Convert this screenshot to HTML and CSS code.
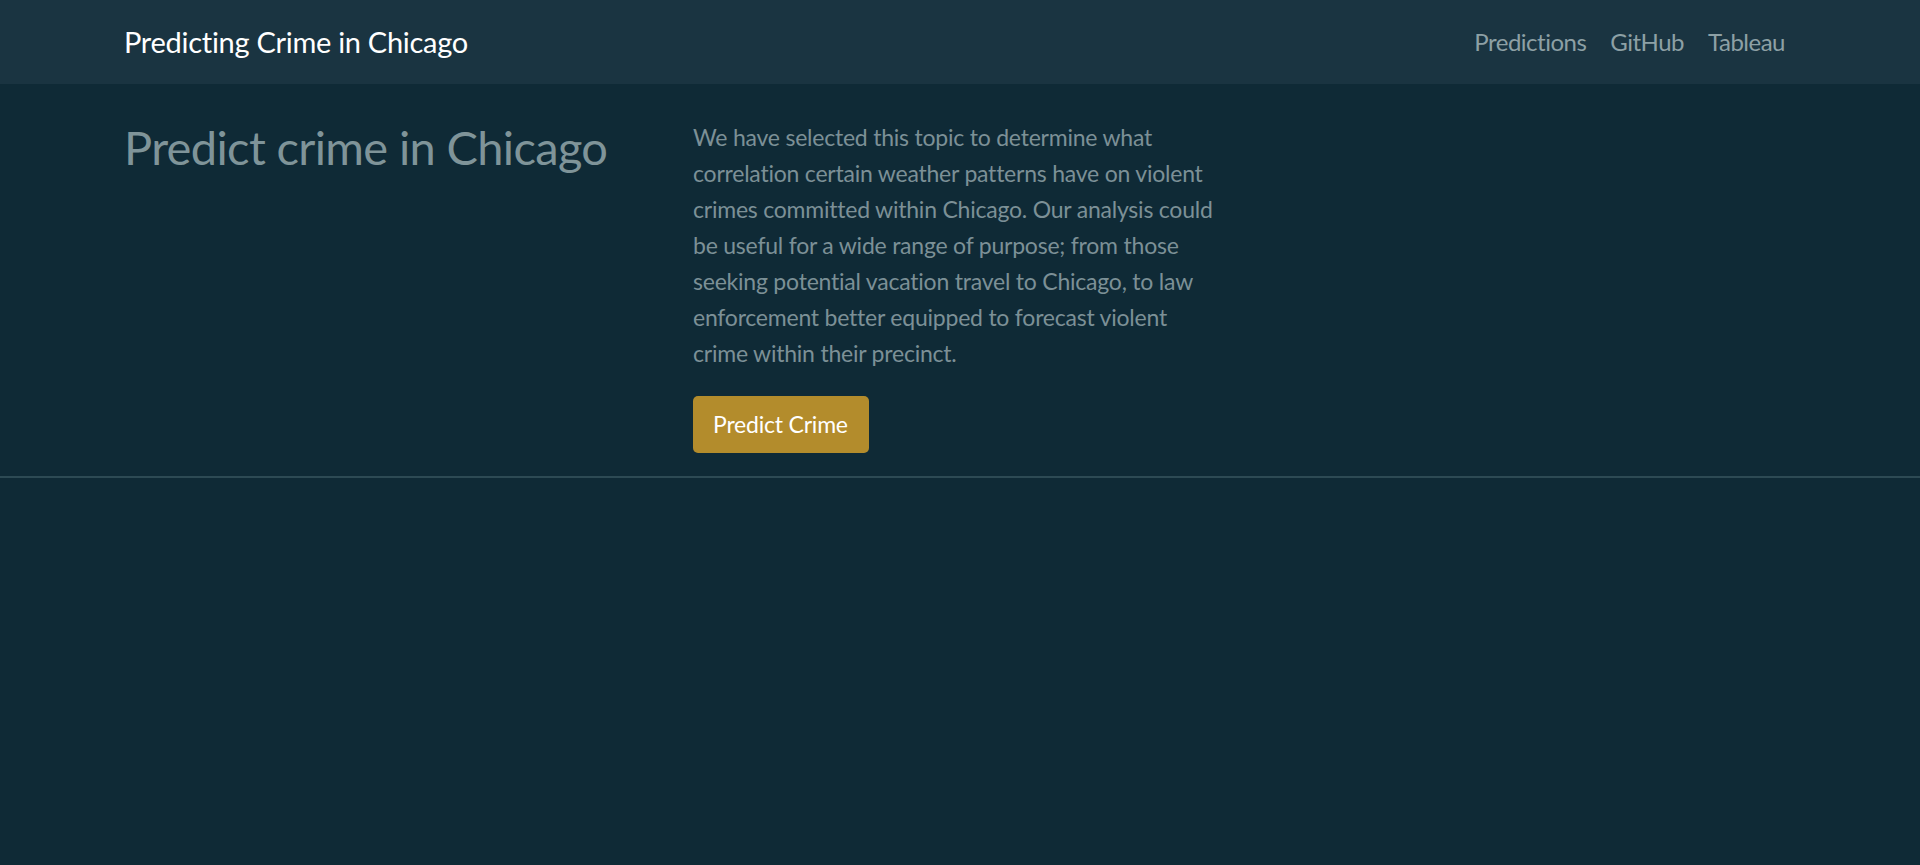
FILE: index.html
```html
<!DOCTYPE html>
<html lang="en">
<head>
<meta charset="utf-8">
<title>Predicting Crime in Chicago</title>
<link rel="stylesheet" href="styles.css">
</head>
<body>
<nav class="navbar">
  <a class="brand" href="#">Predicting Crime in Chicago</a>
  <ul class="nav-links">
    <li><a href="#">Predictions</a></li>
    <li><a href="#">GitHub</a></li>
    <li><a href="#">Tableau</a></li>
  </ul>
</nav>
<section class="hero">
  <h1 class="hero-title">Predict crime in Chicago</h1>
  <div class="hero-body">
    <p class="hero-text">We have selected this topic to determine what correlation certain weather patterns have on violent crimes committed within Chicago. Our analysis could be useful for a wide range of purpose; from those seeking potential vacation travel to Chicago, to law enforcement better equipped to forecast violent crime within their precinct.</p>
    <a class="btn" href="#">Predict Crime</a>
  </div>
</section>
</body>
</html>
```
FILE: styles.css
```css
* { box-sizing: border-box; }
html, body {
  margin: 0;
  padding: 0;
  height: 100%;
}
body {
  background: #0f2a36;
  font-family: Lato, "Noto Sans", sans-serif;
  color: #7f9499;
}
a { text-decoration: none; }

.navbar {
  height: 84px;
  background: #1a3441;
  display: flex;
  align-items: center;
  justify-content: space-between;
  padding: 0 123px 2px 124px;
}
.brand {
  color: #ffffff;
  font-size: 29px;
  letter-spacing: -0.28px;
}
.nav-links {
  list-style: none;
  margin: 0;
  padding: 0;
  display: flex;
}
.nav-links a {
  display: block;
  padding: 0 12px;
  font-size: 24px;
  letter-spacing: -0.5px;
  color: #8da0a5;
}

.hero {
  display: grid;
  grid-template-columns: 569px 560px;
  padding: 35px 0 23px 124px;
  border-bottom: 2px solid #2d4a54;
}
.hero-title {
  margin: 0;
  font-size: 47px;
  font-weight: 400;
  line-height: 1.2;
  letter-spacing: -0.65px;
  color: #7f9499;
}
.hero-text {
  margin: 0 0 25px;
  font-size: 23px;
  line-height: 36px;
  letter-spacing: -0.22px;
  color: #7c9096;
  width: 530px;
}
.btn {
  display: inline-block;
  height: 57px;
  line-height: 57px;
  padding: 0 21px 0 20px;
  background: #b38c2c;
  color: #ffffff;
  font-size: 23px;
  letter-spacing: -0.2px;
  border-radius: 5px;
}
```
